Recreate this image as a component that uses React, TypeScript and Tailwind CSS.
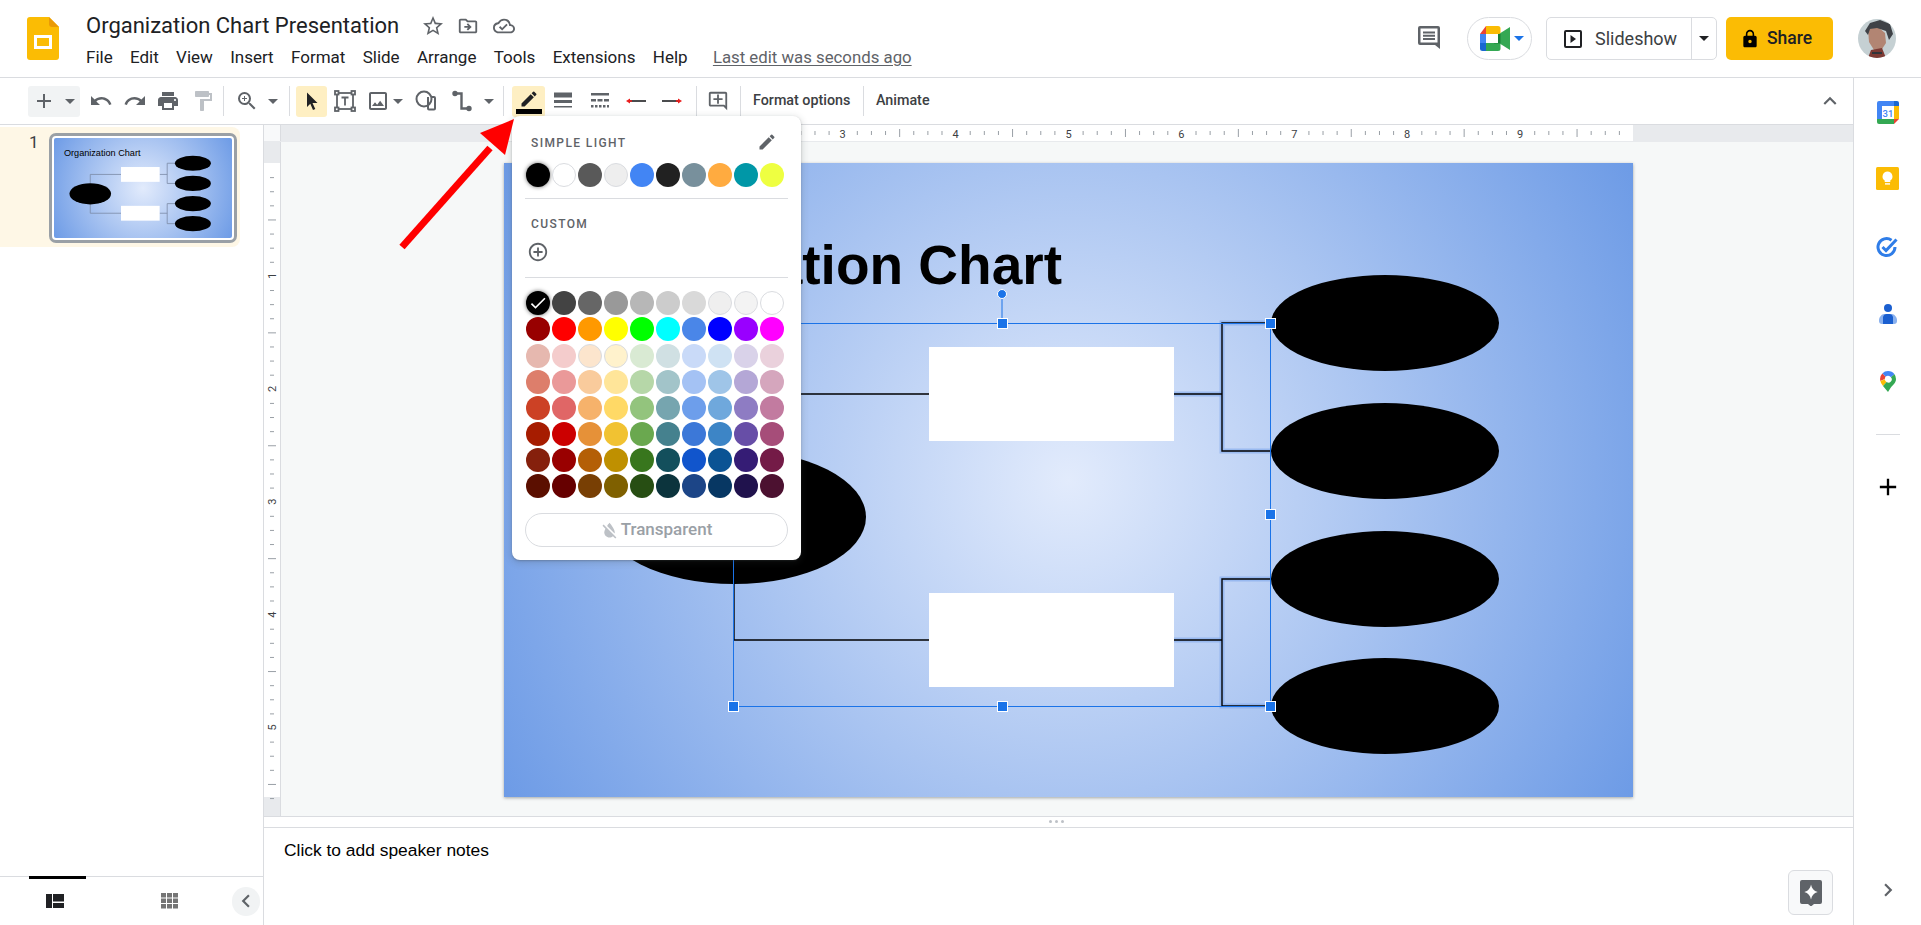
import React from 'react';
import {
  MdAdd, MdUndo, MdRedo, MdPrint, MdFormatPaint, MdZoomIn, MdStarBorder, MdOutlineDriveFileMove,
  MdOutlineCloudDone, MdLock, MdCreate, MdAddCircleOutline, MdCheck, MdFormatColorReset,
  MdChevronLeft, MdChevronRight, MdExpandLess, MdOutlineAddComment, MdOutlineImage,
} from 'react-icons/md';

const themeColors = ['#000000', '#ffffff', '#595959', '#eeeeee', '#4285f4', '#212121', '#78909c', '#ffab40', '#0097a7', '#eeff41'];

const palette = [
  ['#000000', '#434343', '#666666', '#999999', '#b7b7b7', '#cccccc', '#d9d9d9', '#efefef', '#f3f3f3', '#ffffff'],
  ['#980000', '#ff0000', '#ff9900', '#ffff00', '#00ff00', '#00ffff', '#4a86e8', '#0000ff', '#9900ff', '#ff00ff'],
  ['#e6b8af', '#f4cccc', '#fce5cd', '#fff2cc', '#d9ead3', '#d0e0e3', '#c9daf8', '#cfe2f3', '#d9d2e9', '#ead1dc'],
  ['#dd7e6b', '#ea9999', '#f9cb9c', '#ffe599', '#b6d7a8', '#a2c4c9', '#a4c2f4', '#9fc5e8', '#b4a7d6', '#d5a6bd'],
  ['#cc4125', '#e06666', '#f6b26b', '#ffd966', '#93c47d', '#76a5af', '#6d9eeb', '#6fa8dc', '#8e7cc3', '#c27ba0'],
  ['#a61c00', '#cc0000', '#e69138', '#f1c232', '#6aa84f', '#45818e', '#3c78d8', '#3d85c6', '#674ea7', '#a64d79'],
  ['#85200c', '#990000', '#b45f06', '#bf9000', '#38761d', '#134f5c', '#1155cc', '#0b5394', '#351c75', '#741b47'],
  ['#5b0f00', '#660000', '#783f04', '#7f6000', '#274e13', '#0c343d', '#1c4587', '#073763', '#20124d', '#4c1130'],
];

const lightOnes = ['#ffffff', '#eeeeee', '#efefef', '#f3f3f3', '#fce5cd', '#fff2cc'];

const menus = ['File', 'Edit', 'View', 'Insert', 'Format', 'Slide', 'Arrange', 'Tools', 'Extensions', 'Help'];

const rightOvals = [160, 288, 416, 543];

const leftConnectors = ['M230 287V231H425', 'M230 421V477H425'];

const rightConnectors = [
  'M670 231H718',
  'M670 477H718',
  'M768 160H718V288H768',
  'M768 416H718V543H768',
];

const connectorPaths = [...leftConnectors, ...rightConnectors];

const handles = [
  [229, 160], [498, 160], [766, 160], [229, 351], [766, 351], [229, 543], [498, 543], [766, 543],
];

const Caret = ({ color = '#5f6368' }: { color?: string }) => (
  <svg width="10" height="5" viewBox="0 0 10 5" className="shrink-0">
    <path d="M0 0h10L5 5z" fill={color} />
  </svg>
);

const Sep = ({ className }: { className: string }) => (
  <div className={`w-px h-[30px] bg-[#dadce0] shrink-0 ${className}`} />
);

const SlidesLogo = () => (
  <svg width="32" height="43" viewBox="0 0 32 43" className="shrink-0">
    <path d="M3 0h19l10 10v30a3 3 0 0 1-3 3H3a3 3 0 0 1-3-3V3a3 3 0 0 1 3-3z" fill="#fbbc04" />
    <path d="M22 0l10 10h-7a3 3 0 0 1-3-3z" fill="#ea9a06" />
    <rect x="8.5" y="19.5" width="15" height="11" fill="none" stroke="#fff" strokeWidth="3" />
  </svg>
);

const CommentIcon = () => (
  <svg width="26" height="26" viewBox="0 0 26 26">
    <path d="M4 2h18a2 2 0 0 1 2 2v21l-5-4H4a2 2 0 0 1-2-2V4a2 2 0 0 1 2-2z" fill="#5f6368" />
    <rect x="4.5" y="4.5" width="17" height="14" fill="#fff" />
    <path d="M7 7.5h12v2H7zM7 10.7h12v2H7zM7 13.9h12v2H7z" fill="#5f6368" />
  </svg>
);

const MeetLogo = () => (
  <svg width="30" height="25" viewBox="0 0 30 25" className="shrink-0">
    <path d="M6 0h12a2.5 2.5 0 0 1 2.5 2.5V8H6z" fill="#fbbc04" />
    <path d="M6 0v8H0z" fill="#ea4335" />
    <path d="M0 8h6v9H0z" fill="#4285f4" />
    <path d="M0 17h6v8H2.5A2.5 2.5 0 0 1 0 22.5z" fill="#1967d2" />
    <path d="M6 17h14.5v5.5A2.5 2.5 0 0 1 18 25H6z" fill="#34a853" />
    <path d="M14 12.5L20.5 7 30 1v23l-9.500-6z" fill="#34a853" />
    <path d="M20.500 8v9.500H14v-9.500z" fill="#188038" />
    <rect x="6" y="8" width="12" height="9" fill="#fff" />
  </svg>
);

const SlideshowIcon = () => (
  <svg width="18" height="18" viewBox="0 0 18 18" className="shrink-0">
    <rect x="1" y="1" width="16" height="16" rx="1" fill="none" stroke="#202124" strokeWidth="2" />
    <path d="M6.500 5v8l5.500-4z" fill="#202124" />
  </svg>
);

const Avatar = () => (
  <svg width="38" height="39" viewBox="0 0 38 39" className="shrink-0">
    <defs>
      <clipPath id="avatar-clip">
        <ellipse cx="19" cy="19.500" rx="19" ry="19.500" />
      </clipPath>
    </defs>
    <g clipPath="url(#avatar-clip)">
      <rect width="38" height="39" fill="#c5d0d3" />
      <path d="M10 10l10-2 7 6 1 10-4 6-8 1-5-8z" fill="#b28573" />
      <path d="M7 12l5-8 10-3 10 4 3 10-4 6-3-9-9-3-7 1-2 6z" fill="#3f4247" />
      <path d="M13 31l11-2 4 10H10z" fill="#7c3a34" />
      <path d="M14 33h10v2H14z" fill="#30343a" />
    </g>
  </svg>
);

const SelectIcon = () => (
  <svg width="20" height="20" viewBox="0 0 20 20">
    <path d="M5 1.500l10.500 10.500h-5l2.800 6-2.300 1-2.700-6.200L5 16z" fill="#202124" />
  </svg>
);

const TextBoxIcon = () => (
  <svg width="24" height="24" viewBox="0 0 24 24" fill="none" stroke="#5f6368" strokeWidth="1.800">
    <rect x="4" y="4" width="16" height="16" />
    <path d="M8.500 8.500h7M12 8.500v8" />
    <g fill="#fff">
      <rect x="2" y="2" width="3.500" height="3.500" />
      <rect x="18.500" y="2" width="3.500" height="3.500" />
      <rect x="2" y="18.500" width="3.500" height="3.500" />
      <rect x="18.500" y="18.500" width="3.500" height="3.500" />
    </g>
  </svg>
);

const ShapeIcon = () => (
  <svg width="24" height="24" viewBox="0 0 24 24" fill="none" stroke="#5f6368" strokeWidth="2">
    <path d="M15 9v11.500a1 1 0 0 0 1 1h5a1 1 0 0 0 1-1V10a1 1 0 0 0-1-1h-3" transform="translate(-1 -1)" />
    <circle cx="10" cy="10" r="7.500" />
  </svg>
);

const LineIcon = () => (
  <svg width="24" height="24" viewBox="0 0 24 24" fill="#5f6368" stroke="#5f6368" strokeWidth="2.400">
    <path d="M6 4.500h5.500v15H18" fill="none" />
    <circle cx="5" cy="4.500" r="1.500" />
    <circle cx="19" cy="19.500" r="1.500" />
  </svg>
);

const WeightIcon = () => (
  <svg width="24" height="24" viewBox="0 0 24 24" fill="#5f6368">
    <rect x="3" y="3.500" width="18" height="5" />
    <rect x="3" y="11" width="18" height="3" />
    <rect x="3" y="17" width="18" height="1.500" />
  </svg>
);

const DashIcon = () => (
  <svg width="24" height="24" viewBox="0 0 24 24" fill="#5f6368">
    <rect x="3" y="4" width="18" height="2.500" />
    <path d="M3 10h5v2.500H3zM9.500 10h5v2.500h-5zM16 10h5v2.500h-5z" />
    <path d="M3 16h2.500v2.500H3zM7 16h2.500v2.500H7zM11 16h2.500v2.500H11zM15 16h2.500v2.500H15zM19 16h2v2.500h-2z" />
  </svg>
);

const LineStartIcon = () => (
  <svg width="24" height="24" viewBox="0 0 24 24">
    <rect x="6" y="11.200" width="16" height="1.600" fill="#202124" />
    <path d="M2 12l4-2.500v5z" fill="#ea1d1d" />
    <rect x="5" y="11.200" width="3" height="1.600" fill="#ea1d1d" />
  </svg>
);

const LineEndIcon = () => (
  <svg width="24" height="24" viewBox="0 0 24 24">
    <rect x="2" y="11.200" width="16" height="1.600" fill="#202124" />
    <path d="M22 12l-4-2.500v5z" fill="#ea1d1d" />
    <rect x="16" y="11.200" width="3" height="1.600" fill="#ea1d1d" />
  </svg>
);

const FilmstripIcon = () => (
  <svg width="18" height="14" viewBox="0 0 18 14" fill="#202124">
    <rect x="0" y="0" width="6" height="14" />
    <rect x="7" y="0" width="11" height="7.500" />
    <rect x="7" y="9" width="11" height="5" />
  </svg>
);

const GridIcon = () => (
  <svg width="18" height="16" viewBox="0 0 18 16" fill="#757575">
    {[0, 6, 12].map((x) =>
      [0, 5.500, 11].map((y) => <rect key={`${x}-${y}`} x={x} y={y} width="5" height="4.500" />)
    )}
  </svg>
);

const ExploreIcon = () => (
  <svg width="22" height="26" viewBox="0 0 22 26">
    <path d="M2 0h18a2 2 0 0 1 2 2v20a2 2 0 0 1-2 2h-6l-3 2.500L8 24H2a2 2 0 0 1-2-2V2a2 2 0 0 1 2-2z" fill="#5f6368" />
    <path d="M11 4.500c.8 4 2.700 6.300 6.700 7.500-4 1.200-5.900 3.500-6.700 7.500-.8-4-2.700-6.300-6.700-7.500 4-1.200 5.900-3.500 6.700-7.500z" fill="#fff" />
  </svg>
);

const CalendarIcon = () => (
  <svg width="22" height="23" viewBox="0 0 22 23">
    <path d="M2 0h15v5H5v13H0V2a2 2 0 0 1 2-2z" fill="#4285f4" />
    <path d="M17 0h3a2 2 0 0 1 2 2v3h-5z" fill="#1967d2" />
    <rect x="17" y="5" width="5" height="13" fill="#fbbc04" />
    <path d="M0 18h17v5H2a2 2 0 0 1-2-2z" fill="#34a853" />
    <path d="M17 18h5l-5 5z" fill="#ea4335" />
    <rect x="5" y="5" width="12" height="13" fill="#fff" />
    <text x="11" y="15.500" textAnchor="middle" fontSize="9.500" fontFamily="Roboto, sans-serif" fontWeight="500" fill="#4285f4">31</text>
  </svg>
);

const KeepIcon = () => (
  <svg width="23" height="23" viewBox="0 0 23 23">
    <rect width="23" height="23" rx="1.500" fill="#fbbc04" />
    <path d="M11.500 4.500a5 5 0 0 0-2.800 9.100V15h5.600v-1.400a5 5 0 0 0-2.800-9.100z" fill="#fff" />
    <rect x="9" y="16.200" width="5" height="1.400" fill="#fff" />
  </svg>
);

const TasksIcon = () => (
  <svg width="23" height="21" viewBox="0 0 23 21" fill="none">
    <path d="M15.500 3.200A8.500 8.500 0 1 0 19 10" stroke="#2f7de8" strokeWidth="3" />
    <path d="M6.500 10l3.500 3.500L20.500 2.500" stroke="#2f7de8" strokeWidth="3" />
  </svg>
);

const ContactsIcon = () => (
  <svg width="18" height="20" viewBox="0 0 18 20">
    <circle cx="9" cy="4" r="4" fill="#1a5fd0" />
    <path d="M3 20a3 3 0 0 1-3-3v-1c0-3 3-6 5-6h8c2 0 5 3 5 6v1a3 3 0 0 1-3 3z" fill="#8ab1ee" />
    <path d="M4 20v-7a4 4 0 0 1 4-3h2a4 4 0 0 1 4 3v7z" fill="#1a5fd0" />
  </svg>
);

const MapsIcon = () => (
  <svg width="16" height="21" viewBox="0 0 16 21">
    <path d="M2.300 2.400A8 8 0 0 1 8 0v4.800a3.200 3.200 0 0 0-2.400 1z" fill="#4285f4" />
    <path d="M8 0a8 8 0 0 1 6.500 3.300l-3.600 3A3.200 3.200 0 0 0 8 4.800z" fill="#4285f4" />
    <path d="M2.300 2.400l3.300 3.400a3.200 3.200 0 0 0-.8 2.200l-4.400 2A8 8 0 0 1 2.300 2.400z" fill="#ea4335" />
    <path d="M.4 10l4.500-1.800a3.200 3.200 0 0 0 1.700 2.800L3 15c-1.100-1.500-2.100-3-2.600-5z" fill="#fbbc04" />
    <path d="M14.500 3.300A8 8 0 0 1 16 8c0 4-3 5.500-5.500 9L8 21 3 15l3.600-4a3.200 3.200 0 0 0 4.300-4.700z" fill="#34a853" />
  </svg>
);

// shapes shared by the big slide and its thumbnail
const SlideShapes = ({ stroke, width }: { stroke: string; width: number }) => (
  <>
    {connectorPaths.map((d) => (
      <path key={d} d={d} fill="none" stroke={stroke} strokeWidth={width} />
    ))}
    <rect x="425" y="184" width="245" height="94" fill="#fff" />
    <rect x="425" y="430" width="245" height="94" fill="#fff" />
    <ellipse cx="230" cy="354" rx="132" ry="67" fill="#000" />
    {rightOvals.map((cy) => (
      <ellipse key={cy} cx="881" cy={cy} rx="114" ry="48" fill="#000" />
    ))}
  </>
);

const Slide = () => (
  <div className="relative w-[1129px] h-[634px] shrink-0 bg-[radial-gradient(circle_at_center,#e2ebfc_0%,#a9c4f1_49%,#6d9be6_100%)] shadow-[0_1px_3px_rgba(60,64,67,0.45)]">
    <svg width="1129" height="634" viewBox="0 0 1129 634" className="absolute inset-0">
      {rightConnectors.map((d) => (
        <path key={d} d={d} fill="none" stroke="#7fa8ec" strokeOpacity="0.6" strokeWidth="5" />
      ))}
      <SlideShapes stroke="#000" width={1.400} />
      <path d="M229.500 160.500H766.500V543.500H229.500z" fill="none" stroke="#1a73e8" strokeWidth="1" />
      <path d="M498 160V131" stroke="#1a73e8" strokeWidth="1" />
      <circle cx="498" cy="131" r="4.500" fill="#1a73e8" stroke="#fff" strokeWidth="1" />
      {handles.map(([x, y]) => (
        <rect key={`${x}-${y}`} x={x - 4.500} y={y - 4.500} width="10" height="10" fill="#1a73e8" stroke="#fff" strokeWidth="1" />
      ))}
    </svg>
    <div className="absolute right-[571px] top-[72px] font-['Liberation_Sans',sans-serif] font-bold text-[55px] leading-[60px] text-black whitespace-nowrap">
      Organization Chart
    </div>
  </div>
);

const Thumbnail = () => (
  <div className="w-[188px] h-[110px] border-[3px] border-[#9aa0a6] rounded-[7px] p-[2px] bg-white shrink-0">
    <div className="relative w-full h-full rounded-[2px] overflow-hidden bg-[radial-gradient(circle_at_center,#e2ebfc_0%,#a9c4f1_49%,#6d9be6_100%)]">
      <svg viewBox="0 0 1129 634" preserveAspectRatio="none" className="absolute inset-0 w-full h-full">
        <SlideShapes stroke="#7b8aa5" width={5} />
        <text x="63" y="115" fontSize="58" fontFamily="Liberation Sans, sans-serif" fill="#000">Organization Chart</text>
      </svg>
    </div>
  </div>
);

const TopRuler = () => {
  const origin = 223;
  const inch = 112.9;
  const ticks = Array.from({ length: 81 }, (_, i) => i);
  return (
    <svg width="1572" height="16" className="block">
      <rect width="1572" height="16" fill="#e8eaed" />
      <rect x={origin} width="1129" height="16" fill="#fff" />
      {ticks.map((i) => {
        if (i % 8 === 0) return null;
        const x = origin + (i * inch) / 8;
        const half = i % 4 === 0;
        return <rect key={i} x={x} y={half ? 4 : 6} width="1" height={half ? 8 : 4} fill="#9aa0a6" />;
      })}
      {/* 1 and 2 sit behind the colour menu */}
      {[3, 4, 5, 6, 7, 8, 9].map((n) => (
        <text key={n} x={origin + n * inch} y="12.500" textAnchor="middle" fontSize="11" fontFamily="Roboto, sans-serif" fill="#3c4043">{n}</text>
      ))}
    </svg>
  );
};

const SideRuler = () => {
  const origin = 21;
  const inch = 112.9;
  const ticks = Array.from({ length: 46 }, (_, i) => i);
  return (
    <svg width="16" height="674" className="block">
      <rect width="16" height="674" fill="#e8eaed" />
      <rect y={origin} width="16" height="634" fill="#fff" />
      {ticks.map((i) => {
        if (i % 8 === 0) return null;
        const y = origin + (i * inch) / 8;
        const half = i % 4 === 0;
        return <rect key={i} x={half ? 4 : 6} y={y} width={half ? 8 : 4} height="1" fill="#9aa0a6" />;
      })}
      {[1, 2, 3, 4, 5].map((n) => (
        <text key={n} x="8" y={origin + n * inch} transform={`rotate(-90 8 ${origin + n * inch})`} dy="4" textAnchor="middle" fontSize="11" fontFamily="Roboto, sans-serif" fill="#3c4043">{n}</text>
      ))}
    </svg>
  );
};

const Swatch = ({ color, ring, children }: { color: string; ring?: boolean; children?: React.ReactNode }) => (
  <div
    className={`w-6 h-6 rounded-full shrink-0 flex items-center justify-center ${lightOnes.includes(color) ? 'border border-[#dadce0]' : ''} ${ring ? 'shadow-[0_0_4px_rgba(0,0,0,0.6)]' : ''}`}
    style={{ backgroundColor: color }}
  >
    {children}
  </div>
);

const ColorPopover = () => (
  <div className="absolute left-[512px] top-[116px] w-[289px] h-[444px] bg-white rounded-lg shadow-[0_2px_6px_2px_rgba(60,64,67,0.15),0_1px_2px_rgba(60,64,67,0.3)] px-[13px] pt-[18px] font-['Roboto',sans-serif]">
    <div className="flex items-center justify-between h-4 pl-[6px] pr-[11px]">
      <span className="text-[12px] font-medium mt-px tracking-[1.4px] text-[#5f6368]">SIMPLE LIGHT</span>
      <MdCreate size={20} color="#5f6368" />
    </div>
    <div className="flex gap-[2px] mt-[13px] pl-px">
      {themeColors.map((c, i) => (
        <Swatch key={c} color={c} ring={i === 0} />
      ))}
    </div>
    <div className="h-px bg-[#dadce0] mt-[11px]" />
    <div className="h-4 mt-[16px] pl-[6px] flex items-center">
      <span className="text-[12px] font-medium mt-px tracking-[1.4px] text-[#5f6368]">CUSTOM</span>
    </div>
    <div className="mt-[10px] h-[22px] flex items-center">
      <MdAddCircleOutline size={22} color="#5f6368" className="ml-[2px]" />
    </div>
    <div className="h-px bg-[#dadce0] mt-[14px]" />
    <div className="mt-[13px] flex flex-col gap-[2px] pl-px">
      {palette.map((row, r) => (
        <div key={r} className={`flex gap-[2px] ${r === 1 ? 'mb-px' : ''}`}>
          {row.map((c, i) => (
            <Swatch key={c + i} color={c} ring={r === 0 && i === 0}>
              {r === 0 && i === 0 && <MdCheck size={20} color="#fff" />}
            </Swatch>
          ))}
        </div>
      ))}
    </div>
    <div className="mt-[15px] h-[34px] rounded-full border border-[#dadce0] flex items-center justify-center gap-[1px] pr-[2px] text-[#9aa0a6]">
      <MdFormatColorReset size={21} color="#bdc1c6" />
      <span className="text-[17px] font-medium">Transparent</span>
    </div>
  </div>
);

const Header = () => (
  <header className="h-[78px] shrink-0 border-b border-[#dadce0] flex items-start font-['Roboto',sans-serif]">
    <div className="ml-[27px] mt-[17px]">
      <SlidesLogo />
    </div>
    <div className="ml-[27px] mt-[11px]">
      <div className="flex items-center h-[30px]">
        <span className="text-[22px] text-[#202124] leading-[30px] whitespace-nowrap">Organization Chart Presentation</span>
        <MdStarBorder size={24} color="#5f6368" className="ml-[22px]" />
        <MdOutlineDriveFileMove size={22} color="#5f6368" className="ml-[12px]" />
        <MdOutlineCloudDone size={22} color="#5f6368" className="ml-[14px]" />
      </div>
      <div className="flex items-center h-[24px] mt-[5px] gap-[17.300px] text-[17px] text-[#202124]">
        {menus.map((m) => (
          <span key={m}>{m}</span>
        ))}
        <span className="ml-[8px] text-[16.800px] text-[#5f6368] underline underline-offset-2">Last edit was seconds ago</span>
      </div>
    </div>
    <div className="ml-auto mt-[17px] flex items-center h-[43px] pr-[25px]">
      <div className="-mt-[4px]">
        <CommentIcon />
      </div>
      <div className="ml-[25px] w-[65px] h-[43px] rounded-full border border-[#dadce0] flex items-center pl-[12px] gap-[4px]">
        <MeetLogo />
        <Caret color="#1a73e8" />
      </div>
      <div className="ml-[14px] w-[171px] h-[43px] rounded-[5px] border border-[#dadce0] flex items-center text-[18px] text-[#3c4043]">
        <div className="w-[145px] h-full border-r border-[#dadce0] flex items-center pl-[17px] gap-[13px]">
          <SlideshowIcon />
          <span>Slideshow</span>
        </div>
        <div className="flex-1 flex items-center justify-center">
          <Caret color="#202124" />
        </div>
      </div>
      <div className="ml-[9px] w-[107px] h-[43px] rounded-[5px] bg-[#fbbc04] flex items-center pl-[14px] gap-[7px] text-[17.5px] font-medium text-[#202124]">
        <MdLock size={20} color="#000" />
        <span>Share</span>
      </div>
      <div className="ml-[25px]">
        <Avatar />
      </div>
    </div>
  </header>
);

const Toolbar = () => (
  <div className="h-[47px] shrink-0 border-b border-[#dadce0] flex items-center pl-[28px] pr-[10px] font-['Roboto',sans-serif] text-[#3c4043]">
    <div className="w-[52px] h-[31px] rounded-[3px] bg-[#f1f3f4] flex items-center pl-[4px] shrink-0">
      <MdAdd size={24} color="#5f6368" />
      <div className="ml-[9px]"><Caret /></div>
    </div>
    <MdUndo size={24} color="#5f6368" className="ml-[9px] shrink-0" />
    <MdRedo size={24} color="#5f6368" className="ml-[10px] shrink-0" />
    <MdPrint size={24} color="#5f6368" className="ml-[9px] shrink-0" />
    <MdFormatPaint size={24} color="#bdc1c6" className="ml-[11px] shrink-0" />
    <Sep className="ml-[8px]" />
    <MdZoomIn size={24} color="#5f6368" className="ml-[11px] shrink-0" />
    <div className="ml-[9px]"><Caret /></div>
    <Sep className="ml-[11px]" />
    <div className="ml-[6px] w-[31px] h-[31px] rounded-[3px] bg-[#feefc3] flex items-center justify-center shrink-0">
      <SelectIcon />
    </div>
    <div className="ml-[6px] shrink-0"><TextBoxIcon /></div>
    <MdOutlineImage size={24} color="#5f6368" className="ml-[9px] shrink-0" />
    <div className="ml-[3px]"><Caret /></div>
    <div className="ml-[11px] shrink-0"><ShapeIcon /></div>
    <div className="ml-[12px] shrink-0"><LineIcon /></div>
    <div className="ml-[10px]"><Caret /></div>
    <Sep className="ml-[9px]" />
    <div className="ml-[8px] w-[33px] h-[31px] rounded-[3px] bg-[#feefc3] flex flex-col items-center justify-start shrink-0">
      <MdCreate size={20} color="#202124" className="mt-[3px]" />
      <div className="w-[26px] h-[5px] bg-black mt-[0px]" />
    </div>
    <div className="ml-[6px] shrink-0"><WeightIcon /></div>
    <div className="ml-[13px] shrink-0"><DashIcon /></div>
    <div className="ml-[12px] shrink-0"><LineStartIcon /></div>
    <div className="ml-[12px] shrink-0"><LineEndIcon /></div>
    <Sep className="ml-[12px]" />
    <MdOutlineAddComment size={22} color="#5f6368" className="ml-[10px] mr-px shrink-0" />
    <Sep className="ml-[10px]" />
    <span className="ml-[12px] w-[98px] text-[14.3px] font-medium whitespace-nowrap">Format options</span>
    <Sep className="ml-[12px]" />
    <span className="ml-[12px] text-[14.3px] font-medium">Animate</span>
    <MdExpandLess size={26} color="#5f6368" className="ml-auto shrink-0" />
  </div>
);

const Filmstrip = () => (
  <aside className="w-[264px] shrink-0 border-r border-[#dadce0] flex flex-col font-['Roboto',sans-serif]">
    <div className="flex-1 pt-[2px]">
      <div className="w-[240px] h-[120px] bg-[#fef7e6] rounded-r-lg flex items-start pt-[6px]">
        <span className="ml-[29px] w-[20px] mt-[-1px] text-[17px] leading-[20px] text-[#3c4043]">1</span>
        <Thumbnail />
      </div>
    </div>
    <div className="relative h-[49px] shrink-0 border-t border-[#dadce0] flex items-center">
      <div className="absolute left-[29px] top-[-1px] w-[57px] h-[3px] bg-black" />
      <div className="ml-[46px]"><FilmstripIcon /></div>
      <div className="ml-[97px]"><GridIcon /></div>
      <div className="ml-[53px] w-[28px] h-[29px] rounded-full bg-[#f1f3f4] flex items-center justify-center">
        <MdChevronLeft size={26} color="#5f6368" />
      </div>
    </div>
  </aside>
);

const Editor = () => (
  <div className="flex-1 min-w-0 flex flex-col">
    <div className="h-[17px] shrink-0 flex border-b border-[#e8eaed]">
      <div className="w-[17px] h-[16px] shrink-0 bg-[#f8f9fa] border-r border-[#dadce0]" />
      <TopRuler />
    </div>
    <div className="flex-1 min-h-0 flex border-b border-[#dadce0]">
      <div className="w-[17px] shrink-0 border-r border-[#dadce0] overflow-hidden">
        <SideRuler />
      </div>
      <div className="flex-1 bg-[#f6f8f8] pl-[223px] pt-[21px] overflow-hidden">
        <Slide />
      </div>
    </div>
    <div className="h-[11px] shrink-0 border-b border-[#dadce0] flex items-center justify-center gap-[3px] pb-px pr-[4px]">
      <div className="w-[3px] h-[3px] rounded-full bg-[#bdc1c6]" />
      <div className="w-[3px] h-[3px] rounded-full bg-[#bdc1c6]" />
      <div className="w-[3px] h-[3px] rounded-full bg-[#bdc1c6]" />
    </div>
    <div className="relative h-[97px] shrink-0 pl-[20px] pt-[12px] font-['Liberation_Sans',sans-serif] text-[17.4px] leading-[20px] text-black">
      Click to add speaker notes
      <div className="absolute right-[20px] top-[42px] w-[45px] h-[45px] rounded-[6px] border border-[#dadce0] bg-[#f8f9fa] flex items-center justify-center">
        <ExploreIcon />
      </div>
    </div>
  </div>
);

const AddonBar = () => (
  <aside className="w-[68px] shrink-0 border-l border-[#dadce0] flex flex-col items-center font-['Roboto',sans-serif]">
    <div className="mt-[23px]"><CalendarIcon /></div>
    <div className="mt-[43px]"><KeepIcon /></div>
    <div className="mt-[47px]"><TasksIcon /></div>
    <div className="mt-[46px]"><ContactsIcon /></div>
    <div className="mt-[47px]"><MapsIcon /></div>
    <div className="mt-[42px] w-[24px] h-px bg-[#dadce0]" />
    <MdAdd size={28} color="#000" className="mt-[38px]" />
    <MdChevronRight size={26} color="#5f6368" className="mt-auto mb-[22px]" />
  </aside>
);

const RedArrow = () => (
  <svg width="130" height="140" viewBox="0 0 130 140" className="absolute left-[395px] top-[115px] pointer-events-none">
    <path d="M7 132L95 33" stroke="#ff0000" strokeWidth="7" />
    <path d="M119 4L85 18 110 40z" fill="#ff0000" />
  </svg>
);

export default function App() {
  return (
    <div className="relative w-full h-screen bg-white overflow-hidden flex flex-col">
      <Header />
      <div className="flex-1 min-h-0 flex">
        <div className="flex-1 min-w-0 flex flex-col">
          <Toolbar />
          <div className="flex-1 min-h-0 flex">
            <Filmstrip />
            <Editor />
          </div>
        </div>
        <AddonBar />
      </div>
      <ColorPopover />
      <RedArrow />
    </div>
  );
}
